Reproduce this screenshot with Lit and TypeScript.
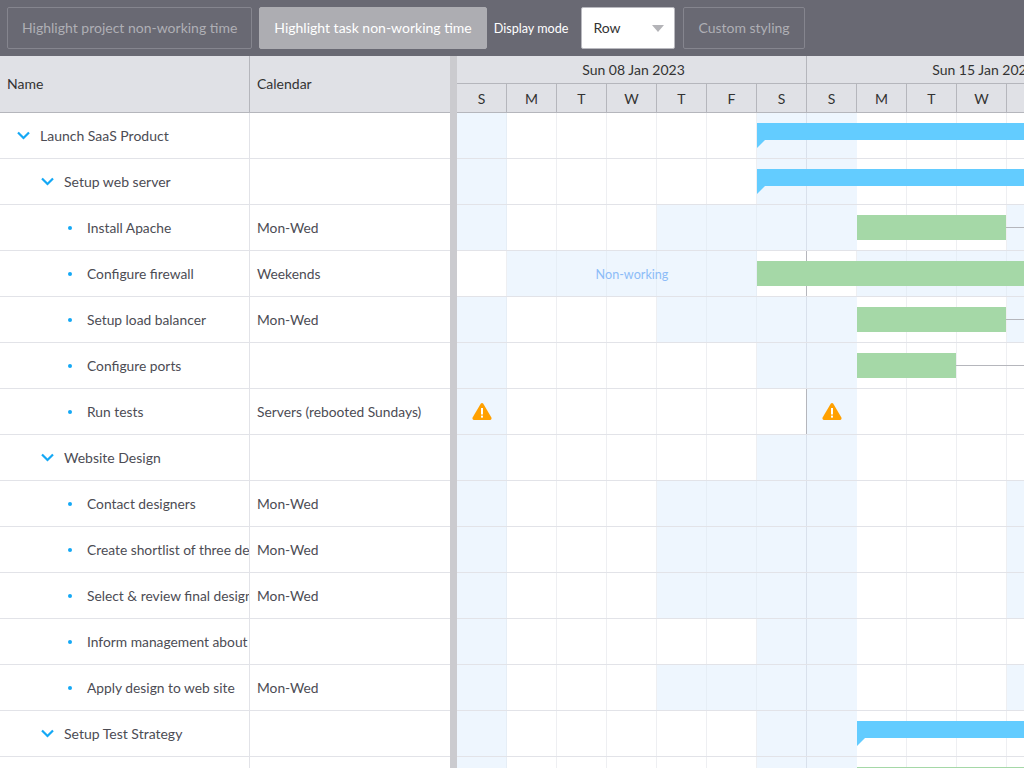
import { LitElement, html, css, svg } from "lit";
import { customElement } from "lit/decorators.js";
import { classMap } from "lit/directives/class-map.js";

type Bar = { kind: "summary" | "leaf"; day: number; width: number; link?: boolean };
type Row = {
  name: string;
  calendar?: string;
  level: number;
  parent?: boolean;
  bar?: Bar;
  warn?: number[];
  label?: boolean;
};

const DAY = 50;
const LETTERS = ["S", "M", "T", "W", "T", "F", "S", "S", "M", "T", "W", "T"];

// shaded day indexes per calendar
const SHADES: Record<string, number[]> = {
  "": [0, 6, 7],
  "Mon-Wed": [0, 4, 5, 6, 7, 11],
  Weekends: [1, 2, 3, 4, 5, 8, 9, 10, 11],
  "Servers (rebooted Sundays)": [0, 7],
};

const ROWS: Row[] = [
  { name: "Launch SaaS Product", level: 0, parent: true, bar: { kind: "summary", day: 6, width: 300 } },
  { name: "Setup web server", level: 1, parent: true, bar: { kind: "summary", day: 6, width: 300 } },
  { name: "Install Apache", calendar: "Mon-Wed", level: 2, bar: { kind: "leaf", day: 8, width: 149, link: true } },
  { name: "Configure firewall", calendar: "Weekends", level: 2, label: true, bar: { kind: "leaf", day: 6, width: 300 } },
  { name: "Setup load balancer", calendar: "Mon-Wed", level: 2, bar: { kind: "leaf", day: 8, width: 149, link: true } },
  { name: "Configure ports", level: 2, bar: { kind: "leaf", day: 8, width: 99, link: true } },
  { name: "Run tests", calendar: "Servers (rebooted Sundays)", level: 2, warn: [0, 7] },
  { name: "Website Design", level: 1, parent: true },
  { name: "Contact designers", calendar: "Mon-Wed", level: 2 },
  { name: "Create shortlist of three designs", calendar: "Mon-Wed", level: 2 },
  { name: "Select & review final design", calendar: "Mon-Wed", level: 2 },
  { name: "Inform management about decision", level: 2 },
  { name: "Apply design to web site", calendar: "Mon-Wed", level: 2 },
  { name: "Setup Test Strategy", level: 1, parent: true, bar: { kind: "summary", day: 8, width: 200 } },
  { name: "", level: 2, bar: { kind: "leaf", day: 8, width: 200 } },
];

const chevron = svg`<path d="M1 1.5 L6.5 7 L12 1.5" fill="none" stroke="#14a8f5" stroke-width="2.2"/>`;
const warning = svg`
  <path d="M10 0 C10.6 0 11 0.3 11.3 0.8 L19.4 14.6 C19.9 15.6 19.4 17 18 17 L2 17 C0.6 17 0.1 15.6 0.6 14.6 L8.7 0.8 C9 0.3 9.4 0 10 0 Z" fill="#ffa000"/>
  <rect x="9" y="5" width="2" height="6.5" fill="#fff"/>
  <rect x="9" y="12.6" width="2" height="2" fill="#fff"/>`;

@customElement("app-root")
export class AppRoot extends LitElement {
  static styles = css`
    :host {
      display: block;
      height: 768px;
      overflow: hidden;
      background: #fff;
      font-family: Lato, "Open Sans", sans-serif;
      font-size: 14px;
      color: #4c4c54;
    }
    .toolbar {
      display: flex;
      align-items: center;
      height: 56px;
      box-sizing: border-box;
      padding: 0 7px;
      gap: 7px;
      background: #696973;
    }
    .btn {
      height: 42px;
      box-sizing: border-box;
      padding: 0 14px 2px;
      display: flex;
      align-items: center;
      border: 1px solid #85858e;
      border-radius: 2px;
      color: #afafb5;
      white-space: nowrap;
    }
    .btn.active {
      background: #adadb2;
      border-color: #adadb2;
      color: #fff;
    }
    .label {
      font-size: 12.6px;
      color: #fff;
      margin: 0 6px 0 0;
    }
    .combo {
      width: 94px;
      height: 42px;
      box-sizing: border-box;
      margin-right: 1px;
      padding: 0 10px 2px 11px;
      display: flex;
      align-items: center;
      justify-content: space-between;
      background: #fff;
      border: 1px solid #b9b9bf;
      border-radius: 2px;
      color: #333;
    }
    .caret {
      width: 0;
      height: 0;
      margin-top: 2px;
      border-left: 6px solid transparent;
      border-right: 6px solid transparent;
      border-top: 7px solid #b4b4b8;
    }
    .gantt {
      display: grid;
      grid-template-columns: 450px 7px 1fr;
    }
    .locked {
      min-width: 0;
      overflow: hidden;
    }
    .splitter {
      background: #cbcbcf;
    }
    .schedule {
      min-width: 0;
      overflow: hidden;
    }
    .grid-head {
      display: grid;
      grid-template-columns: 250px 200px;
      height: 57px;
      box-sizing: border-box;
      background: #e0e1e6;
      border-bottom: 1px solid #b5b6bc;
      color: #333;
    }
    .grid-head div {
      display: flex;
      align-items: center;
      padding: 0 0 2px 7px;
    }
    .grid-head div:first-child {
      border-right: 1px solid #b5b6bc;
    }
    .row {
      display: grid;
      grid-template-columns: 250px 200px;
      height: 46px;
      box-sizing: border-box;
      border-bottom: 1px solid #e2e3e8;
    }
    .cell {
      display: flex;
      align-items: center;
      min-width: 0;
      overflow: hidden;
      white-space: nowrap;
      padding-left: 7px;
      font-size: 13.8px;
    }
    .cell.name {
      border-right: 1px solid #e2e3e8;
    }
    .cell.parent {
      font-size: 14px;
    }
    .tree {
      width: 13px;
      margin-right: 10px;
      flex: none;
      display: flex;
      align-items: center;
      justify-content: center;
    }
    .tree.leaf {
      width: 12px;
      margin-right: 11px;
    }
    .tree svg {
      display: block;
    }
    .cell.level-0 { padding-left: 17px; }
    .cell.level-1 { padding-left: 41px; }
    .cell.level-2 { padding-left: 64px; }
    .dot {
      width: 4px;
      height: 4px;
      border-radius: 50%;
      background: #14a8f5;
    }
    .weeks {
      display: grid;
      grid-template-columns: 350px 350px;
      width: 700px;
      height: 28px;
      box-sizing: border-box;
      background: #e0e1e6;
      border-bottom: 1px solid #b5b6bc;
      color: #333;
    }
    .weeks div {
      display: flex;
      align-items: center;
      justify-content: center;
      box-sizing: border-box;
      padding-left: 4px;
      border-right: 1px solid #b5b6bc;
    }
    .days {
      display: grid;
      grid-template-columns: repeat(12, 50px);
      height: 29px;
      box-sizing: border-box;
      background: #e0e1e6;
      border-bottom: 1px solid #b5b6bc;
      color: #333;
    }
    .days div {
      display: flex;
      align-items: center;
      justify-content: center;
      box-sizing: border-box;
      border-right: 1px solid #b5b6bc;
    }
    .track {
      position: relative;
      display: grid;
      grid-template-columns: repeat(12, 50px);
      height: 46px;
      box-sizing: border-box;
      border-bottom: 1px solid #e2e3e8;
    }
    .slot {
      box-sizing: border-box;
      border-right: 1px solid #eeeff2;
    }
    .slot.week {
      border-right-color: #b5b6bc;
    }
    .slot.shade {
      background: #eef6fe;
      border-right-color: #e6eef6;
    }
    .slot.shade.week {
      border-right-color: #d9e1ec;
    }
    .slot.shade.end {
      border-right-color: #eef6fe;
    }
    .nonworking {
      position: absolute;
      left: 50px;
      width: 250px;
      top: 0;
      bottom: 0;
      padding-top: 2px;
      box-sizing: border-box;
      display: flex;
      align-items: center;
      justify-content: center;
      font-size: 12.6px;
      color: #8cbcf8;
    }
    .bar {
      position: absolute;
      top: 10px;
      height: 25px;
      background: #a5d8a7;
    }
    .bar.summary {
      height: 17px;
      background: #63ccff;
    }
    .bar.summary::after {
      content: "";
      position: absolute;
      left: 0;
      top: 17px;
      border-top: 8px solid #63ccff;
      border-right: 8px solid transparent;
    }
    .link {
      position: absolute;
      top: 22px;
      height: 1px;
      right: -60px;
      background: #b5b6bc;
    }
    .warn {
      position: absolute;
      top: 14px;
      width: 20px;
      height: 17px;
    }
  `;

  renderTree(row: Row) {
    if (row.parent) {
      return html`<span class="tree">
        <svg width="13" height="9" viewBox="0 0 13 9">${chevron}</svg>
      </span>`;
    }
    return html`<span class="tree leaf"><span class="dot"></span></span>`;
  }

  renderTrack(row: Row) {
    const shaded = SHADES[row.calendar ?? ""];
    return html`<div class="track">
      ${LETTERS.map(
        (_, i) => html`<div
          class=${classMap({
            slot: true,
            shade: shaded.includes(i),
            week: i === 6,
            end: i === 7,
          })}
        ></div>`
      )}
      ${row.label ? html`<div class="nonworking">Non-working</div>` : null}
      ${row.bar
        ? html`<div
            class="bar ${row.bar.kind}"
            style="left:${row.bar.day * DAY}px;width:${row.bar.width}px"
          ></div>`
        : null}
      ${row.bar?.link
        ? html`<div
            class="link"
            style="left:${row.bar.day * DAY + row.bar.width}px"
          ></div>`
        : null}
      ${(row.warn ?? []).map(
        (d) => html`<svg
          class="warn"
          style="left:${d * DAY + 15}px"
          viewBox="0 0 20 17"
        >
          ${warning}
        </svg>`
      )}
    </div>`;
  }

  render() {
    return html`
      <div class="toolbar">
        <div class="btn">Highlight project non-working time</div>
        <div class="btn active">Highlight task non-working time</div>
        <span class="label">Display mode</span>
        <div class="combo"><span>Row</span><span class="caret"></span></div>
        <div class="btn">Custom styling</div>
      </div>
      <div class="gantt">
        <div class="locked">
          <div class="grid-head"><div>Name</div><div>Calendar</div></div>
          ${ROWS.map(
            (row) => html`<div class="row">
              <div
                class="cell name level-${row.level} ${row.parent ? "parent" : ""}"
              >
                ${this.renderTree(row)}<span>${row.name}</span>
              </div>
              <div class="cell">${row.calendar ?? ""}</div>
            </div>`
          )}
        </div>
        <div class="splitter"></div>
        <div class="schedule">
          <div class="weeks"><div>Sun 08 Jan 2023</div><div>Sun 15 Jan 2023</div></div>
          <div class="days">${LETTERS.map((l) => html`<div>${l}</div>`)}</div>
          ${ROWS.map((row) => this.renderTrack(row))}
        </div>
      </div>
    `;
  }
}
